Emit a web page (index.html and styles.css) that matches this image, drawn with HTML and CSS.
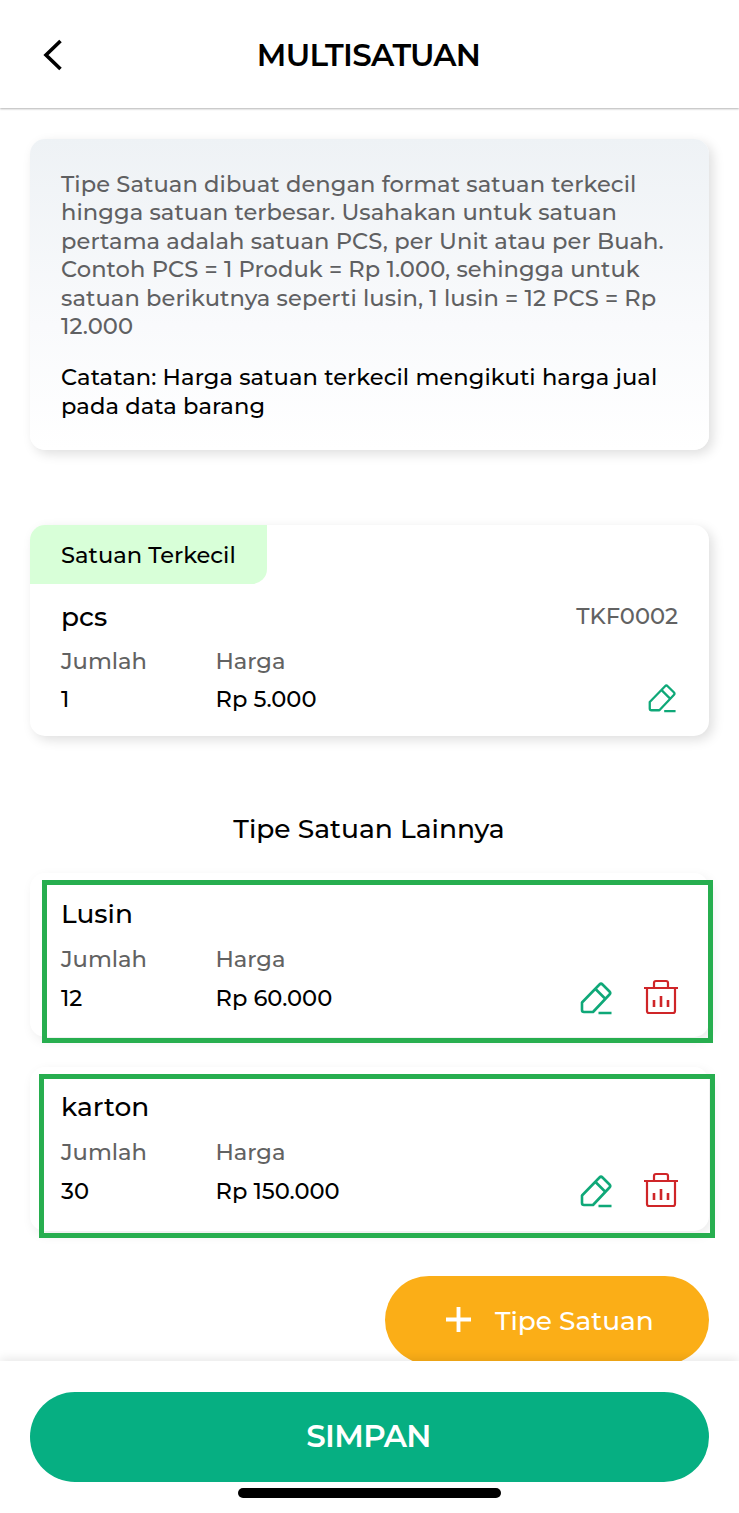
FILE: index.html
```html
<!DOCTYPE html>
<html lang="id">
<head>
  <meta charset="UTF-8" />
  <meta name="viewport" content="width=device-width, initial-scale=1.0" />
  <title>Multisatuan</title>
  <link rel="stylesheet" href="styles.css">
</head>
<body>
  <header>
    <svg class="back" viewBox="0 0 20 32"><path d="M17.500 2 3 16l14.500 14" /></svg>
    <h1>MULTISATUAN</h1>
  </header>

  <main>
    <div class="card info">
      <p class="muted">
        Tipe Satuan dibuat dengan format satuan terkecil<br>
        hingga satuan terbesar. Usahakan untuk satuan<br>
        pertama adalah satuan PCS, per Unit atau per Buah.<br>
        Contoh PCS = 1 Produk = Rp 1.000, sehingga untuk<br>
        satuan berikutnya seperti lusin, 1 lusin = 12 PCS = Rp<br>
        12.000
      </p>
      <p class="note">
        Catatan: Harga satuan terkecil mengikuti harga jual<br>
        pada data barang
      </p>
    </div>

    <div class="card terkecil">
      <div class="tag">Satuan Terkecil</div>
      <div class="isi">
        <div class="judul"><h2>pcs</h2><span class="kode">TKF0002</span></div>
        <div class="baris label"><span>Jumlah</span><span>Harga</span></div>
        <div class="baris nilai">
          <span>1</span><span>Rp 5.000</span>
          <svg class="edit" viewBox="0 0 32 34"><path d="M2 21.500 19.500 3.500q1.500-1.500 3 0l7 7q1.500 1.500 0 3L13 31H4q-2 0-2-2zM15.500 8l10 10M18.500 32h13" /></svg>
        </div>
      </div>
    </div>

    <h3>Tipe Satuan Lainnya</h3>

    <div class="card lain">
      <div class="sorot sorot1"></div>
      <div class="judul"><h2>Lusin</h2></div>
      <div class="baris label"><span>Jumlah</span><span>Harga</span></div>
      <div class="baris nilai">
        <span>12</span><span>Rp 60.000</span>
        <svg class="edit" viewBox="0 0 32 34"><path d="M2 21.500 19.500 3.500q1.500-1.500 3 0l7 7q1.500 1.500 0 3L13 31H4q-2 0-2-2zM15.500 8l10 10M18.500 32h13" /></svg>
        <svg class="hapus" viewBox="0 0 34 36"><path d="M0 9h34M3 9v23q0 2 2 2h24q2 0 2-2V9M10 9V4q0-2 2-2h10q2 0 2 2v5" /><path class="garis" d="M10 21v7M17 17v11M24 21v7" /></svg>
      </div>
    </div>

    <div class="card lain karton">
      <div class="sorot sorot2"></div>
      <div class="judul"><h2>karton</h2></div>
      <div class="baris label"><span>Jumlah</span><span>Harga</span></div>
      <div class="baris nilai">
        <span>30</span><span>Rp 150.000</span>
        <svg class="edit" viewBox="0 0 32 34"><path d="M2 21.500 19.500 3.500q1.500-1.500 3 0l7 7q1.500 1.500 0 3L13 31H4q-2 0-2-2zM15.500 8l10 10M18.500 32h13" /></svg>
        <svg class="hapus" viewBox="0 0 34 36"><path d="M0 9h34M3 9v23q0 2 2 2h24q2 0 2-2V9M10 9V4q0-2 2-2h10q2 0 2 2v5" /><path class="garis" d="M10 21v7M17 17v11M24 21v7" /></svg>
      </div>
    </div>

    <button class="tambah">
      <svg viewBox="0 0 26 26"><path d="M13 0v26M0 13h26" /></svg>
      Tipe Satuan
    </button>
  </main>

  <footer>
    <button class="simpan">SIMPAN</button>
    <div class="home"></div>
  </footer>
</body>
</html>
```
FILE: styles.css
```css
* {
  box-sizing: border-box;
}
body {
  margin: 0;
  height: 1513px;
  display: flex;
  flex-direction: column;
  overflow: hidden;
  font-family: Montserrat, Inter, sans-serif;
  font-size: 22.6px;
  font-weight: 500;
  background-color: #fff;
  color: #000;
}
h1, h2, h3, p {
  margin: 0;
}
svg {
  display: block;
  fill: none;
  stroke: currentColor;
}
header {
  flex: none;
  height: 108px;
  display: grid;
  grid-template-columns: 43px 1fr 43px;
  align-items: center;
  padding-top: 2px;
  box-shadow: 0 1px 2px rgba(0,0,0,0.3);
}
.back {
  grid-column: 2;
  grid-row: 1;
  width: 20px;
  height: 32px;
  stroke-width: 3.6;
}
h1 {
  grid-column: 2;
  grid-row: 1;
  justify-self: center;
  padding-right: 2px;
  font-size: 31px;
  font-weight: 600;
  letter-spacing: -0.7px;
}
main {
  flex: none;
  height: 1253px;
  padding: 31px 30px 0;
  display: flex;
  flex-direction: column;
  overflow: hidden;
}
.card {
  position: relative;
  flex: none;
  border-radius: 15px;
  background-color: #fff;
  box-shadow: 4px 4px 12px rgba(0,0,0,0.13);
}
.info {
  height: 311px;
  padding: 31px;
  line-height: 28.4px;
  letter-spacing: 0.08px;
  white-space: nowrap;
  background: linear-gradient(#eef2f5, #f9fafc 60%, #fff);
}
.muted {
  color: #5f6062;
}
.note {
  margin-top: 23px;
}
.terkecil {
  height: 211px;
  margin-top: 75px;
}
.tag {
  width: 237px;
  height: 59px;
  padding-left: 31px;
  line-height: 60px;
  background-color: #d8ffd8;
  border-radius: 15px 0 15px 0;
}
.isi {
  padding: 13px 31px 0;
}
.judul {
  display: flex;
  justify-content: space-between;
  align-items: center;
  height: 38px;
}
h2 {
  font-size: 26.4px;
  font-weight: 500;
}
.kode, .label {
  color: #626262;
}
.baris {
  display: grid;
  grid-template-columns: 154.500px 1fr auto auto;
  align-items: center;
}
.label {
  height: 51px;
}
.nilai {
  height: 24px;
}
.terkecil .nilai {
  margin-top: -2px;
  padding-right: 2px;
}
.edit {
  width: 28px;
  height: 30px;
  margin-top: -1px;
  color: #0fa878;
  stroke-width: 2.6;
  stroke-linejoin: round;
}
h3 {
  margin: 73px 0 25px;
  height: 39px;
  padding-right: 1px;
  line-height: 39px;
  font-size: 26.500px;
  font-weight: 500;
  text-align: center;
}
.lain {
  height: 164px;
  padding: 22px 31px 0;
  margin-bottom: 30px;
  box-shadow: 3px 4px 12px rgba(0,0,0,0.08);
}
.karton {
  padding-top: 21px;
}
.lain h2 {
  margin-top: -2px;
}
.lain .nilai {
  height: 28px;
  margin-top: -3px;
}
.lain .edit {
  width: 32px;
  height: 34px;
}
.hapus {
  width: 34px;
  height: 36px;
  margin: -2px 0 0 32px;
  color: #cf2528;
  stroke-width: 2.2;
}
.garis {
  stroke-width: 2.6;
}
/* kotak hijau penanda */
.sorot {
  position: absolute;
  border: 5px solid #27ae4f;
}
.sorot1 {
  left: 12px;
  right: -4px;
  top: 7px;
  bottom: -6px;
}
.sorot2 {
  left: 9px;
  right: -6px;
  top: 7px;
  bottom: -7px;
}
button {
  border: none;
  color: #fff;
  font-family: inherit;
  cursor: pointer;
}
.tambah {
  flex: none;
  align-self: flex-end;
  width: 324px;
  height: 88px;
  margin-top: 15px;
  padding: 0 0 0 61px;
  display: flex;
  align-items: center;
  gap: 24px;
  font-size: 26.4px;
  font-weight: 500;
  background-color: #fbae17;
  border-radius: 44px;
}
.tambah svg {
  width: 25px;
  height: 25px;
  margin-bottom: 2px;
  stroke-width: 4;
}
footer {
  position: relative;
  flex: 1;
  padding: 31px 30px 0;
  background-color: #fff;
  box-shadow: 0 -2px 10px rgba(0,0,0,0.1);
}
.simpan {
  display: block;
  width: 100%;
  height: 90px;
  padding: 0 8px 3px 6px;
  font-size: 31px;
  font-weight: 600;
  letter-spacing: -0.65px;
  background-color: #06af82;
  border-radius: 45px;
}
.home {
  width: 263px;
  height: 10px;
  margin: 6px auto 0;
  background-color: #000;
  border-radius: 5px;
}
```
